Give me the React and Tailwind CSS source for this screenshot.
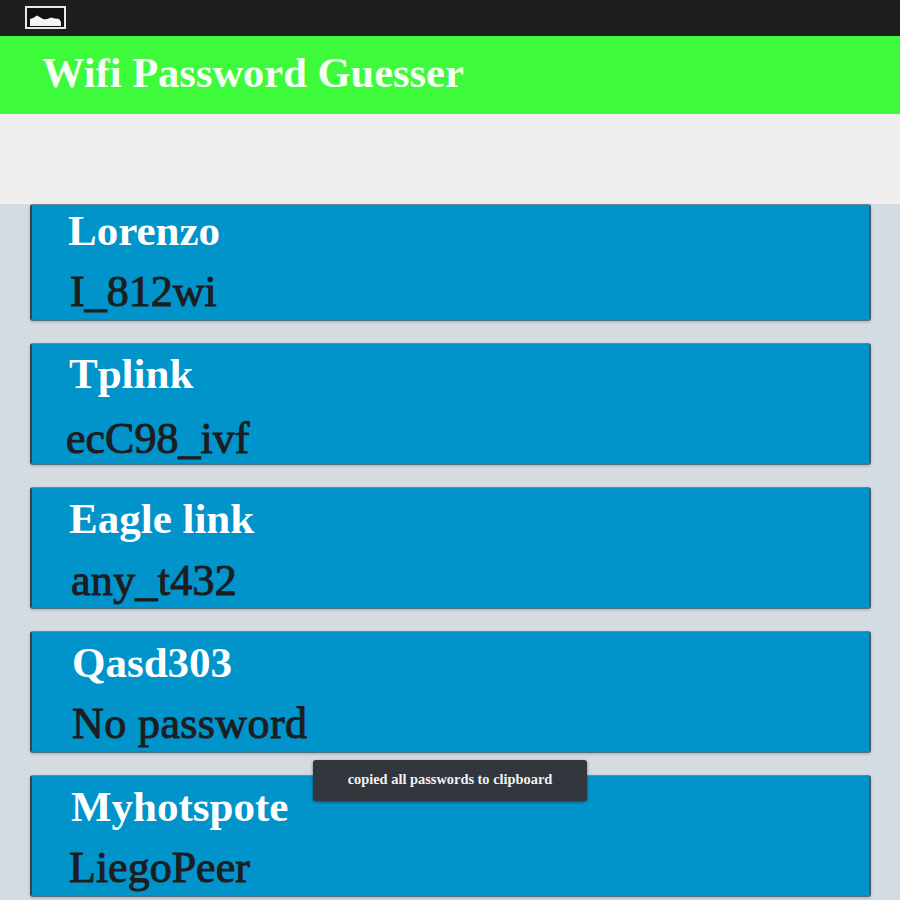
const networks = [
  { name: "Lorenzo", password: "I_812wi", height: "h-[117px]", namePad: "pl-[36px]", passPad: "pl-[38px]", nameTop: "pt-[4px]", passTop: "mt-[16px]", spacing: "tracking-normal" },
  { name: "Tplink", password: "ecC98_ivf", height: "h-[122px]", namePad: "pl-[37px]", passPad: "pl-[34px]", nameTop: "pt-[8px]", passTop: "mt-[20px]", spacing: "tracking-normal" },
  { name: "Eagle link", password: "any_t432", height: "h-[122px]", namePad: "pl-[37px]", passPad: "pl-[39px]", nameTop: "pt-[9px]", passTop: "mt-[17px]", spacing: "tracking-[0.3px]" },
  { name: "Qasd303", password: "No password", height: "h-[122px]", namePad: "pl-[40px]", passPad: "pl-[40px]", nameTop: "pt-[9px]", passTop: "mt-[16px]", spacing: "tracking-[0.4px]" },
  { name: "Myhotspote", password: "LiegoPeer", height: "h-[122px]", namePad: "pl-[39px]", passPad: "pl-[37px]", nameTop: "pt-[9px]", passTop: "mt-[16px]", spacing: "tracking-normal" },
];

const PictureIcon = () => (
  <svg width="41" height="23" viewBox="0 0 41 23" className="ml-[25px] mb-[1px]">
    <rect x="1" y="1" width="39" height="21" fill="#111" stroke="#e8e8e8" strokeWidth="2" />
    <path d="M5 20 V13 Q9 12 12 9.5 Q15 11 18 13 Q22 14 26 11.5 Q30 13 33 12.5 Q35 13 36 16 V20 Z" fill="#f4f4f4" />
  </svg>
);

const NetworkCard = ({ network }) => (
  <div className={`${network.height} shrink-0 overflow-hidden rounded-[3px] bg-[#0094cb] border-l-2 border-r-2 border-b-2 border-t border-l-[#3a4048] border-r-[#4a5a66] border-b-[#55707f] border-t-[#6b8795] shadow-[0_1px_3px_rgba(60,80,95,0.35)]`}>
    <div className={`${network.nameTop} ${network.namePad} text-[43px] leading-[44px] font-bold text-white`}>
      {network.name}
    </div>
    <div className={`${network.passTop} ${network.passPad} ${network.spacing} text-[44px] leading-[46px] [-webkit-text-stroke:1px_#1d1d1f] text-[#1d1d1f]`}>
      {network.password}
    </div>
  </div>
);

const App = () => {
  return (
    <div className="relative w-[900px] h-[900px] overflow-hidden bg-[#d4dce2] font-['Liberation_Serif',serif]">
      <div className="h-[36px] flex items-center bg-[#1e1e1e]">
        <PictureIcon />
      </div>
      <div className="h-[78px] flex items-center pl-[42px] pb-[4px] bg-[#3dfb3a]">
        <h1 className="text-[42.5px] leading-none font-bold text-[#f6fff3]">Wifi Password Guesser</h1>
      </div>
      <div className="h-[90px] bg-[#efefef]"></div>

      <div className="flex flex-col gap-[22px] mx-[30px] w-[841px]">
        {networks.map((network) => (
          <NetworkCard key={network.name} network={network} />
        ))}
      </div>

      <div className="absolute left-[313px] top-[760px] w-[274px] h-[41px] flex items-center justify-center pb-[2px] rounded-[3px] bg-[#32363d] shadow-[0_1px_3px_rgba(0,0,0,0.5)]">
        <span className="text-[14.4px] font-bold text-[#f2f2f2]">copied all passwords to clipboard</span>
      </div>
    </div>
  );
};

export default App;
